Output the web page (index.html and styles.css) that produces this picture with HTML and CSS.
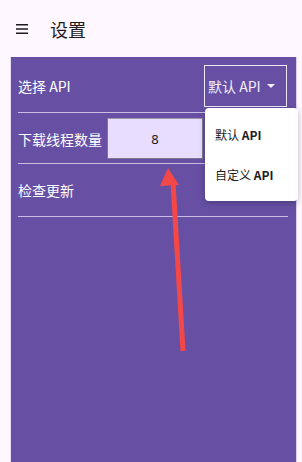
FILE: index.html
```html
<!DOCTYPE html>
<html lang="zh">
<head>
    <meta charset="UTF-8">
    <meta name="viewport" content="width=device-width, initial-scale=1.0">
    <title>设置</title>
    <link rel="stylesheet" href="styles.css">
</head>
<body>
    <header class="top-bar">
        <svg class="menu-icon" width="14" height="12" viewBox="0 0 14 12">
            <rect x="1" y="1" width="12" height="1.5" fill="#1d1b20"/>
            <rect x="1" y="5.25" width="12" height="1.5" fill="#1d1b20"/>
            <rect x="1" y="9.5" width="12" height="1.5" fill="#1d1b20"/>
        </svg>
        <span class="title">设置</span>
    </header>

    <div class="panel">
        <div class="row row-api">
            <span class="label">选择 API</span>
            <div class="select-box">
                <span>默认 API</span>
                <span class="caret"></span>
            </div>
        </div>
        <div class="row row-threads">
            <span class="label">下载线程数量</span>
            <div class="num-input">8</div>
        </div>
        <div class="row row-update">
            <span class="label">检查更新</span>
        </div>

        <!-- open dropdown -->
        <div class="dropdown">
            <div class="dropdown-item">默认 <b>API</b></div>
            <div class="dropdown-item">自定义 <b>API</b></div>
        </div>
    </div>

    <svg class="arrow" width="302" height="462" viewBox="0 0 302 462">
        <line x1="173" y1="182" x2="183" y2="351" stroke="#f44848" stroke-width="5"/>
        <polygon points="168,168 160,186 179,185" fill="#f44848"/>
    </svg>
</body>
</html>
```

FILE: styles.css
```css
body {
    margin: 0;
    padding: 0;
    background: #fef7ff;
    font-family: "Noto Sans CJK SC", "Noto Sans", sans-serif;
    width: 302px;
    height: 462px;
    overflow: hidden;
    position: relative;
}
.top-bar {
    height: 57px;
    display: flex;
    align-items: center;
    padding-left: 15px;
    box-sizing: border-box;
}
.menu-icon {
    margin-top: 1px;
}
.title {
    margin-left: 21px;
    font-size: 18px;
    color: #1d1b20;
    line-height: 1;
}
.panel {
    position: relative;
    margin: 0 5px 0 10px;
    height: 405px;
    background: #6750a4;
    border-left: 1px solid #e4dcf2;
    border-right: 1px solid #d9cdf0;
    box-sizing: border-box;
    padding: 0 8px 0 7px;
}
.row {
    display: flex;
    align-items: center;
    border-bottom: 1px solid #c9bde6;
    box-sizing: border-box;
}
.row-api {
    height: 56px;
    justify-content: space-between;
    padding-top: 2px;
}
.row-threads {
    height: 51px;
    padding-top: 1px;
}
.row-update {
    height: 53px;
}
.label {
    font-size: 14px;
    color: #ffffff;
}
.select-box {
    height: 42px;
    width: 83px;
    box-sizing: border-box;
    border: 1.5px solid #efe8fb;
    display: flex;
    align-items: center;
    padding-left: 3px;
    margin-right: 1px;
    font-size: 14px;
    color: #f3eefc;
    gap: 6px;
}
.caret {
    width: 0;
    height: 0;
    border-left: 4px solid transparent;
    border-right: 4px solid transparent;
    border-top: 4px solid #f3eefc;
}
.num-input {
    margin-left: 5px;
    width: 96px;
    height: 41px;
    box-sizing: border-box;
    background: #e8ddff;
    border: 1px solid #7d7690;
    border-top-color: #9c95ad;
    display: flex;
    align-items: center;
    justify-content: center;
    font-size: 13px;
    color: #1d1b20;
    font-family: "Noto Sans", sans-serif;
}
.dropdown {
    position: absolute;
    left: 194px;
    top: 51px;
    width: 93px;
    height: 93px;
    background: #ffffff;
    border-radius: 4px;
    box-shadow: 0 2px 6px rgba(0, 0, 0, 0.25);
    display: flex;
    flex-direction: column;
    justify-content: center;
    gap: 18px;
}
.dropdown-item {
    font-size: 12px;
    color: #1d1b20;
    padding-left: 10px;
    line-height: 22px;
}
.dropdown-item b {
    font-weight: 600;
}
.arrow {
    position: absolute;
    left: 0;
    top: 0;
}
```
